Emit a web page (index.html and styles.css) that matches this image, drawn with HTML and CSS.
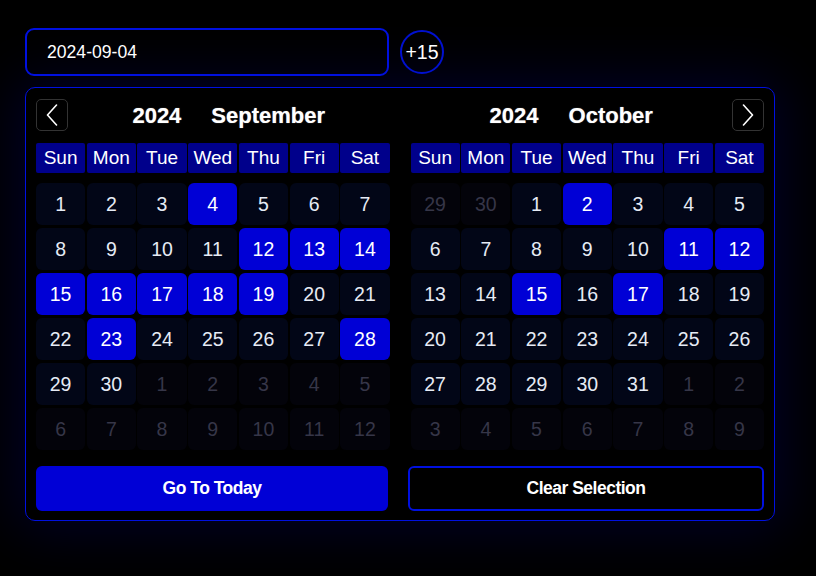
FILE: index.html
```html
<!DOCTYPE html>
<html lang="en">
<head>
<meta charset="utf-8">
<title>Date Range Picker</title>
<link rel="stylesheet" href="styles.css">
</head>
<body>
<div class="page">
  <div class="top">
    <div class="date-input">2024-09-04</div>
    <div class="count">+15</div>
  </div>
  <div class="panel">
    <div class="months">
      <div class="month">
        <div class="month-head">
          <button class="nav"><svg width="12" height="22" viewBox="0 0 12 22"><path d="M10.5 1 L1.5 11 L10.5 21" fill="none" stroke="#fff" stroke-width="1.6" stroke-linecap="round" stroke-linejoin="round"/></svg></button>
          <div class="title"><span>2024</span><span>September</span></div>
        </div>
        <div class="weekdays">
          <div>Sun</div><div>Mon</div><div>Tue</div><div>Wed</div><div>Thu</div><div>Fri</div><div>Sat</div>
        </div>
        <div class="days">
          <div class="d">1</div><div class="d">2</div><div class="d">3</div><div class="d sel">4</div><div class="d">5</div><div class="d">6</div><div class="d">7</div>
          <div class="d">8</div><div class="d">9</div><div class="d">10</div><div class="d">11</div><div class="d sel">12</div><div class="d sel">13</div><div class="d sel">14</div>
          <div class="d sel">15</div><div class="d sel">16</div><div class="d sel">17</div><div class="d sel">18</div><div class="d sel">19</div><div class="d">20</div><div class="d">21</div>
          <div class="d">22</div><div class="d sel">23</div><div class="d">24</div><div class="d">25</div><div class="d">26</div><div class="d">27</div><div class="d sel">28</div>
          <div class="d">29</div><div class="d">30</div><div class="d out">1</div><div class="d out">2</div><div class="d out">3</div><div class="d out">4</div><div class="d out">5</div>
          <div class="d out">6</div><div class="d out">7</div><div class="d out">8</div><div class="d out">9</div><div class="d out">10</div><div class="d out">11</div><div class="d out">12</div>
        </div>
      </div>
      <div class="month">
        <div class="month-head">
          <div class="title"><span>2024</span><span>October</span></div>
          <button class="nav"><svg width="12" height="22" viewBox="0 0 12 22"><path d="M1.5 1 L10.5 11 L1.5 21" fill="none" stroke="#fff" stroke-width="1.6" stroke-linecap="round" stroke-linejoin="round"/></svg></button>
        </div>
        <div class="weekdays">
          <div>Sun</div><div>Mon</div><div>Tue</div><div>Wed</div><div>Thu</div><div>Fri</div><div>Sat</div>
        </div>
        <div class="days">
          <div class="d out">29</div><div class="d out">30</div><div class="d">1</div><div class="d sel">2</div><div class="d">3</div><div class="d">4</div><div class="d">5</div>
          <div class="d">6</div><div class="d">7</div><div class="d">8</div><div class="d">9</div><div class="d">10</div><div class="d sel">11</div><div class="d sel">12</div>
          <div class="d">13</div><div class="d">14</div><div class="d sel">15</div><div class="d">16</div><div class="d sel">17</div><div class="d">18</div><div class="d">19</div>
          <div class="d">20</div><div class="d">21</div><div class="d">22</div><div class="d">23</div><div class="d">24</div><div class="d">25</div><div class="d">26</div>
          <div class="d">27</div><div class="d">28</div><div class="d">29</div><div class="d">30</div><div class="d">31</div><div class="d out">1</div><div class="d out">2</div>
          <div class="d out">3</div><div class="d out">4</div><div class="d out">5</div><div class="d out">6</div><div class="d out">7</div><div class="d out">8</div><div class="d out">9</div>
        </div>
      </div>
    </div>
    <div class="actions">
      <button class="btn primary">Go To Today</button>
      <button class="btn outline">Clear Selection</button>
    </div>
  </div>
</div>
</body>
</html>
```

FILE: styles.css
```css
* { box-sizing: border-box; }
html, body { margin: 0; padding: 0; }
body {
  background: #000;
  color: #fff;
  font-family: "Liberation Sans", Arial, sans-serif;
  width: 816px;
  height: 576px;
  overflow: hidden;
}
.page {
  padding: 28px 0 0 25px;
  width: 776px;
}
.top {
  display: flex;
  align-items: center;
  gap: 11px;
}
.date-input {
  width: 364px;
  height: 48px;
  border: 2px solid #0010e0;
  border-radius: 9px;
  padding-left: 20px;
  display: flex;
  align-items: center;
  font-size: 17.6px;
  color: #fff;
}
.count {
  width: 44px;
  height: 44px;
  border-radius: 50%;
  border: 2px solid #0010d0;
  display: flex;
  align-items: center;
  justify-content: center;
  font-size: 19.5px;
}
.panel {
  margin-top: 11px;
  width: 750px;
  border: 1px solid #0010e0;
  border-radius: 10px;
  padding: 11px 10px 9px;
  box-shadow: 0 0 55px 8px rgba(0, 0, 150, 0.26);
  background: #000;
}
.months {
  display: flex;
  gap: 21px;
}
.month {
  flex: 1;
}
.month-head {
  height: 32px;
  display: flex;
  align-items: center;
}
.nav {
  width: 32px;
  height: 32px;
  border: 1px solid #333;
  border-radius: 5px;
  background: #000;
  padding: 0;
  display: flex;
  align-items: center;
  justify-content: center;
}
.title {
  flex: 1;
  display: flex;
  justify-content: center;
  gap: 30px;
  font-size: 22px;
  font-weight: bold;
  padding-top: 2px;
  text-shadow: 0 0 1px rgba(255,255,255,0.6);
}
.weekdays {
  margin-top: 12px;
  display: grid;
  grid-template-columns: repeat(7, 1fr);
  column-gap: 1.5px;
}
.weekdays div {
  height: 30px;
  background: #00008b;
  border-radius: 2px;
  display: flex;
  align-items: center;
  justify-content: center;
  font-size: 19px;
}
.days {
  margin-top: 10px;
  display: grid;
  grid-template-columns: repeat(7, 1fr);
  grid-auto-rows: 42px;
  column-gap: 1.5px;
  row-gap: 3px;
}
.d {
  background: #020617;
  border-radius: 6px;
  display: flex;
  align-items: center;
  justify-content: center;
  font-size: 19.5px;
  color: #e6ebf5;
}
.d.sel {
  background: #0000d6;
  color: #fff;
}
.d.out {
  background: #03030a;
  color: #363648;
}
.actions {
  margin-top: 16px;
  display: flex;
  gap: 20px;
}
.btn {
  flex: 1;
  height: 45px;
  border-radius: 6px;
  font-family: "Liberation Sans", Arial, sans-serif;
  font-weight: bold;
  font-size: 17.5px;
  letter-spacing: -0.5px;
  color: #fff;
  padding: 0;
}
.btn.primary {
  background: #0000d6;
  border: none;
}
.btn.outline {
  background: #000;
  border: 2px solid #0010e0;
}
```
